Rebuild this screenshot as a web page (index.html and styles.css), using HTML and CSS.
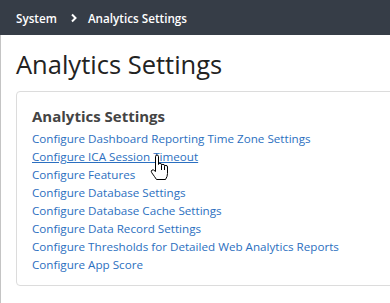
FILE: index.html
```html
<!DOCTYPE html>
<html>
<head>
<meta charset="utf-8">
<link rel="stylesheet" href="styles.css">
</head>
<body>
<header class="topbar">
  <span class="crumb">System</span>
  <svg class="chev" width="8" height="10" viewBox="0 0 8 10"><path d="M2 1.5 L5.5 5 L2 8.5" fill="none" stroke="#fff" stroke-width="2"/></svg>
  <span class="crumb">Analytics Settings</span>
</header>
<main class="content">
  <h1 class="page-title">Analytics Settings</h1>
  <section class="card">
    <h2 class="card-title">Analytics Settings</h2>
    <ul class="links">
      <li><a href="#">Configure Dashboard Reporting Time Zone Settings</a></li>
      <li class="hover-item"><a href="#" class="hovered">Configure ICA Session Timeout</a>
        <svg class="cursor" width="19" height="27" viewBox="0 0 19 27"><path d="M5.5 14 V2.8 Q5.5 1 7 1 Q8.5 1 8.5 2.8 V10.5 Q8.5 9.2 10 9.2 Q11.5 9.2 11.5 10.8 V11.5 Q11.5 10.3 13 10.3 Q14.5 10.3 14.5 11.8 V12.5 Q14.5 11.4 16 11.4 Q17.5 11.4 17.5 13 V19.5 Q17.5 22.5 15.5 25.5 H6.5 Q4.5 22.5 1.8 18.8 Q0.6 17 2 16 Q3.4 15.2 5.5 17.5 Z M11.5 11.5 V16 M14.5 12.5 V16" fill="#fff" stroke="#000" stroke-width="1" stroke-linejoin="round"/></svg>
      </li>
      <li><a href="#">Configure Features</a></li>
      <li><a href="#">Configure Database Settings</a></li>
      <li><a href="#">Configure Database Cache Settings</a></li>
      <li><a href="#">Configure Data Record Settings</a></li>
      <li><a href="#">Configure Thresholds for Detailed Web Analytics Reports</a></li>
      <li><a href="#">Configure App Score</a></li>
    </ul>
  </section>
</main>
</body>
</html>
```
FILE: styles.css
```css
html, body {
  margin: 0;
  padding: 0;
  background: #fff;
  overflow: hidden;
  font-family: "Open Sans", "Liberation Sans", sans-serif;
}
.topbar {
  height: 35px;
  background: #363d47;
  display: flex;
  align-items: center;
  padding-left: 16px;
}
.crumb {
  color: #fff;
  font-size: 11.7px;
  font-weight: 600;
}
.chev {
  margin: 0 10px 0 13px;
}
.content {
  border-left: 1px solid #c4c4c4;
  padding: 1px 0 40px 15px;
}
.page-title {
  margin: 10px 0 0 0;
  font-size: 25.5px;
  font-weight: 400;
  color: #222;
  line-height: 36px;
}
.card {
  margin: 9px -40px 0 0;
  border: 1px solid #dcdcdc;
  border-radius: 4px;
  padding: 14px 15px 11px 15px;
}
.card-title {
  margin: 0 0 4px 0;
  font-size: 15px;
  font-weight: 700;
  color: #444;
  line-height: 20px;
}
.links {
  list-style: none;
  margin: 0;
  padding: 0;
}
.links li {
  line-height: 18px;
  font-size: 11.65px;
}
.links a {
  color: #2b6fc0;
  text-decoration: none;
}
.links a.hovered {
  text-decoration: underline;
}
.hover-item {
  position: relative;
}
.cursor {
  position: absolute;
  left: 118px;
  top: 6px;
}
```
